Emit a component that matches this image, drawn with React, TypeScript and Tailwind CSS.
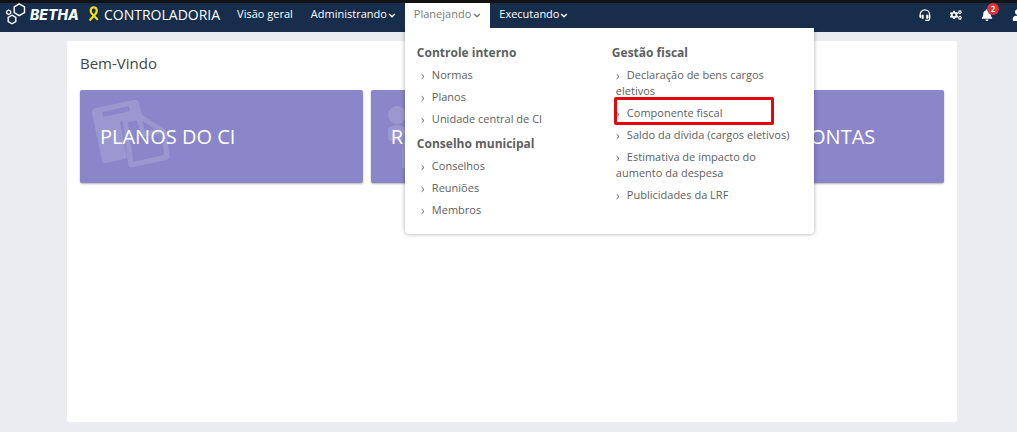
import { FaBell, FaCogs, FaUser } from "react-icons/fa";

const columns = [
  [
    { title: "Controle interno", links: ["Normas", "Planos", "Unidade central de CI"] },
    { title: "Conselho municipal", links: ["Conselhos", "Reuniões", "Membros"] },
  ],
  [
    {
      title: "Gestão fiscal",
      links: [
        "Declaração de bens cargos eletivos",
        "Componente fiscal",
        "Saldo da dívida (cargos eletivos)",
        "Estimativa de impacto do aumento da despesa",
        "Publicidades da LRF",
      ],
    },
  ],
];

function BethaMark() {
  return (
    <svg width="20" height="22" viewBox="0 0 20 22" fill="none" stroke="white" strokeWidth="1.4">
      <path d="M13.2.9l5.3 3v5.6l-5.3 3.1-5-3.1V3.9z" />
      <path d="M6 12.2l3.8 2.2v4.2L6 20.8l-3.8-2.2v-4.2z" />
      <path d="M2.7 7l2 1.1v2.3l-2 1.1-2-1.1V8.1z" strokeWidth="1.2" />
    </svg>
  );
}

function Ribbon() {
  return (
    <svg width="12" height="16" viewBox="0 0 12 16" fill="none" stroke="#f5df16" strokeWidth="2.2">
      <path d="M1.6 14.4L7.8 7.5C9.5 5.2 9 1.4 5.7 1.4S2 5.2 3.6 7.4l6.2 6.4" />
    </svg>
  );
}

function Headset() {
  return (
    <svg width="12" height="13" viewBox="0 0 12 13" fill="none" stroke="white" strokeWidth="1.3">
      <path d="M1.2 8V5.5a4.7 4.7 0 0 1 9.4 0V9.8c0 1-.6 1.6-1.6 1.6H6.2" />
      <path d="M3.7 5.8v4M8.2 5.8v4" strokeWidth="2" />
      <path d="M1.5 6v3M10.4 6v3" strokeWidth="1.5" />
    </svg>
  );
}

function ChevronDown() {
  return (
    <svg width="8" height="8" viewBox="0 0 8 8" fill="none" stroke="currentColor" strokeWidth="1.3">
      <path d="M1.2 3L4 5.8 6.8 3" />
    </svg>
  );
}

function Bullet() {
  return (
    <svg className="mr-[7px] inline align-[-1px]" width="4" height="7" viewBox="0 0 4 7" fill="none" stroke="currentColor">
      <path d="M.6 1.2L3 3.5.6 5.8" />
    </svg>
  );
}

function PlansArt() {
  return (
    <svg width="78" height="72" viewBox="0 0 78 72" fill="none">
      <path
        fill="white"
        fillRule="evenodd"
        d="M4 8L42 0q4-1 5 3l3 12-18 4-4 3 7 36-20 5q-4 1-5-3L0 13q-1-4 4-5zM10 12l1 5 27-6-1-5z"
      />
      <path
        stroke="white"
        strokeWidth="5"
        strokeLinejoin="round"
        d="M33 20l16-3 23 15 3 25-36 8zM47 18l4 16 20-3"
      />
    </svg>
  );
}

function PeopleArt() {
  return (
    <svg width="78" height="72" viewBox="0 0 78 72" fill="white">
      <circle cx="14" cy="15" r="9" />
      <circle cx="39" cy="22" r="11" />
      <circle cx="64" cy="15" r="9" />
      <path d="M5 28q9-6 18 0-2 8-4 13H9q-4 0-4-4zM73 28q-9-6-18 0 2 8 4 13h10q4 0 4-4zM19 68V48q0-12 20-12t20 12v20z" />
    </svg>
  );
}

const cards = [
  { label: "PLANOS DO CI", art: <PlansArt /> },
  { label: "REUNIÕES", art: <PeopleArt /> },
  { label: "PRESTAÇÃO CONTAS", art: null },
];

function PlanningMenu() {
  return (
    <div className="absolute left-0 top-full z-20 flex w-[409px] gap-[13px] rounded-b-sm bg-white px-3 pb-2 pt-4 text-[#5e5f61] shadow-[0_0_4px_rgba(0,0,0,0.35)] [clip-path:inset(0_-6px_-6px_-6px)]">
      {columns.map((groups, i) => (
        <div key={i} className="w-[182px]">
          {groups.map((group) => (
            <section key={group.title}>
              <h3 className="mb-[5px] text-[12px] font-bold leading-[18px]">{group.title}</h3>
              <ul className="mb-2 flex flex-col gap-1.5 pl-1">
                {group.links.map((link) => (
                  <li key={link} className="relative text-[11px] leading-4">
                    <a href="#">
                      <Bullet />
                      {link}
                    </a>
                    {link === "Componente fiscal" && (
                      <span className="pointer-events-none absolute -left-0.5 -top-2 h-7 w-40 rounded-xs border-3 border-[#e5060c]" />
                    )}
                  </li>
                ))}
              </ul>
            </section>
          ))}
        </div>
      ))}
    </div>
  );
}

function Header() {
  return (
    <header className="flex h-8 items-start border-t-3 border-[#111214] bg-[#162d4b] text-white">
      <a href="#" className="flex h-[22px] shrink-0 items-center pl-1.5">
        <BethaMark />
        <span className="ml-1 w-[58px] font-[Inter] text-[14px] font-extrabold italic">BETHA</span>
        <Ribbon />
        <span className="ml-1 text-[14px]">CONTROLADORIA</span>
      </a>
      <nav className="ml-2 flex shrink-0 text-[11px]">
        <a href="#" className="flex h-[25px] items-center px-[9px] pb-0.5">
          Visão geral
        </a>
        <button className="flex h-[25px] items-center gap-px px-[9px] pb-0.5">
          Administrando <ChevronDown />
        </button>
        <div className="relative">
          <button
            aria-expanded="true"
            className="relative z-30 flex h-[25px] items-center gap-0.5 bg-white px-[9px] pb-0.5 text-[#77797c]"
          >
            Planejando <ChevronDown />
          </button>
          <PlanningMenu />
        </div>
        <button className="flex h-[25px] items-center gap-px px-[9px] pb-0.5">
          Executando <ChevronDown />
        </button>
      </nav>
      <div className="-mr-[7px] ml-auto flex h-6 shrink-0 items-center gap-[19px]">
        <button aria-label="Suporte">
          <Headset />
        </button>
        <button aria-label="Configurações">
          <FaCogs className="size-3" />
        </button>
        <button aria-label="Notificações" className="relative">
          <FaBell className="size-3" />
          <span className="absolute -right-1.5 -top-1.5 flex size-3 items-center justify-center rounded-full bg-[#d9373b] text-[8px] font-semibold">
            2
          </span>
        </button>
        <button aria-label="Usuário">
          <FaUser className="size-3" />
        </button>
      </div>
    </header>
  );
}

export default function App() {
  return (
    <div className="flex min-h-screen flex-col overflow-x-hidden bg-[#ebecf0] font-['Open_Sans',sans-serif]">
      <Header />
      <main className="mb-2.5 ml-[67px] mr-[60px] mt-[9px] flex-1 bg-white px-[13px] pt-3">
        <h1 className="mb-4 text-[15px] leading-[21px] text-[#454545]">Bem-Vindo</h1>
        <div className="grid grid-cols-3 gap-2">
          {cards.map((card) => (
            <a
              key={card.label}
              href="#"
              className="relative flex h-[93px] items-center rounded-xs bg-[#8a86c9] pl-5 text-xl text-white shadow-[0_1px_2px_rgba(0,0,0,0.3)]"
            >
              <span className="absolute left-3 top-2.5 opacity-15">{card.art}</span>
              <span className="relative whitespace-nowrap">{card.label}</span>
            </a>
          ))}
        </div>
      </main>
    </div>
  );
}
